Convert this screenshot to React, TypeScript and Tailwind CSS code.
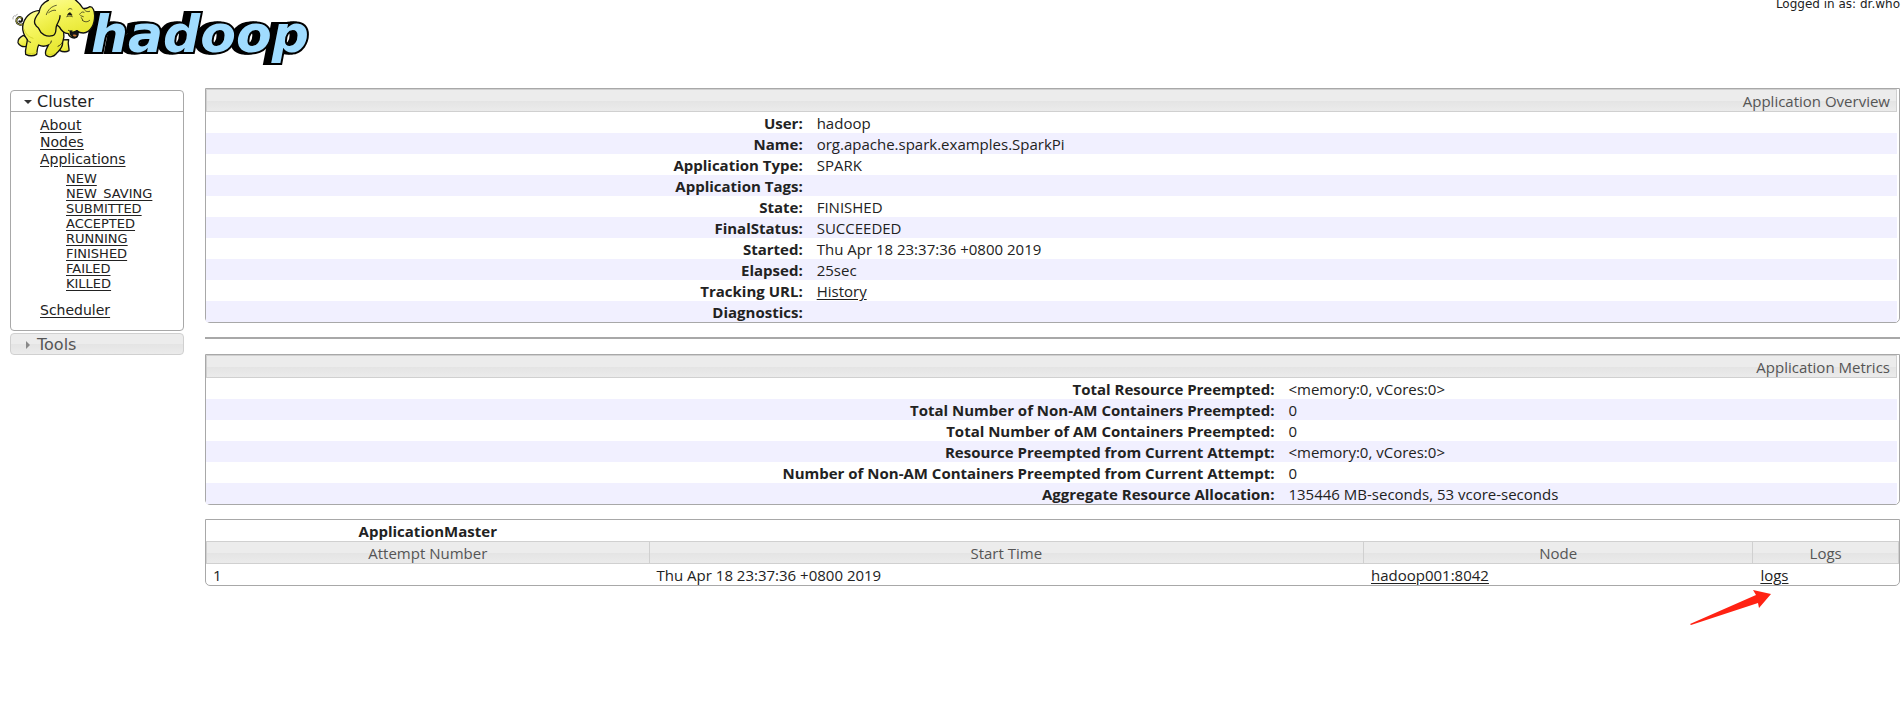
import type { ReactNode } from 'react';

const HEADER_BG =
  'border border-[#d0d0d0] bg-[linear-gradient(#ececec_50%,#e4e4e4_52%,#ebebeb)] font-normal text-[#555]';

const LINK = 'underline underline-offset-2';

const jobStates = ['NEW', 'NEW_SAVING', 'SUBMITTED', 'ACCEPTED', 'RUNNING', 'FINISHED', 'FAILED', 'KILLED'];

type Row = [string, ReactNode];

const overview: Row[] = [
  ['User:', 'hadoop'],
  ['Name:', 'org.apache.spark.examples.SparkPi'],
  ['Application Type:', 'SPARK'],
  ['Application Tags:', ''],
  ['State:', 'FINISHED'],
  ['FinalStatus:', 'SUCCEEDED'],
  ['Started:', 'Thu Apr 18 23:37:36 +0800 2019'],
  ['Elapsed:', '25sec'],
  ['Tracking URL:', <a href="#history" className={LINK}>History</a>],
  ['Diagnostics:', ''],
];

const metrics: Row[] = [
  ['Total Resource Preempted:', '<memory:0, vCores:0>'],
  ['Total Number of Non-AM Containers Preempted:', '0'],
  ['Total Number of AM Containers Preempted:', '0'],
  ['Resource Preempted from Current Attempt:', '<memory:0, vCores:0>'],
  ['Number of Non-AM Containers Preempted from Current Attempt:', '0'],
  ['Aggregate Resource Allocation:', '135446 MB-seconds, 53 vcore-seconds'],
];

function Logo() {
  return (
    <svg width="320" height="70" viewBox="0 0 320 70" role="img" aria-label="hadoop">
      <defs>
        <linearGradient id="skin" x1="0" y1="0" x2="0.4" y2="1">
          <stop offset="0" stopColor="#fdfda0" />
          <stop offset="0.45" stopColor="#f6f660" />
          <stop offset="1" stopColor="#e8e834" />
        </linearGradient>
      </defs>
      <text
        x="91"
        y="52"
        fontFamily="'DejaVu Sans', sans-serif"
        fontSize="52"
        fontWeight="700"
        fontStyle="italic"
        fill="#a0dcff"
        stroke="#000"
        strokeWidth="4"
        paintOrder="stroke"
        className="[filter:drop-shadow(-3px_0_0_#000)_drop-shadow(-3px_0_0_#000)]"
      >
        hadoop
      </text>
      <g transform="scale(0.33333)" stroke="#111" strokeWidth="4" strokeLinecap="round" strokeLinejoin="round">
        <path d="M73 70 C64 78 51 74 49 64 C48 53 58 48 65 54 C70 60 64 68 58 64" fill="none" strokeWidth="6" />
        <path d="M73 70 C64 78 51 74 49 64 C48 53 58 48 65 54" fill="none" stroke="#e8e84a" strokeWidth="2" />
        <path d="M39 57 C38 52 40 49 43 47 M46 49 C47 46 49 44 52 43" fill="none" strokeWidth="1.5" stroke="#555" />
        <path d="M70 106 C60 111 53 119 54 128 C58 138 69 142 79 139 L88 116 Z" fill="url(#skin)" />
        <path d="M182 120 L206 119 C202 132 208 142 207 152 C198 157 188 156 178 151 Z" fill="url(#skin)" />
        <path
          d="M118 31 C91 34 71 53 68 80 C67 96 73 108 82 119 C81 136 74 148 77 163 C87 168 101 168 110 163 C112 152 111 144 116 135 C126 140 137 139 145 135 C142 145 132 153 138 166 C148 174 161 170 168 162 C178 151 189 144 188 127 C192 116 193 106 191 96 L164 24 Z"
          fill="url(#skin)"
        />
        <path
          d="M132 16 C146 -10 178 -20 207 -12 C225 -4 238 8 248 24 C256 29 263 23 270 20 C279 20 284 33 284 47 C284 73 272 98 250 99 C240 99 235 96 231 92 C236 101 235 114 223 114 C214 113 207 107 205 101 C194 100 184 92 179 82 L145 53 Z"
          fill="url(#skin)"
        />
        <path d="M211 94 C216 98 224 97 231 92 C235 99 234 113 223 112 C214 109 210 102 211 94 Z" fill="#171717" />
        <path d="M218 105 C222 103 227 103 230 106 C228 111 222 111 218 105 Z" fill="#cf7b36" stroke="none" />
        <path d="M205 91 C207 93 211 94 216 92" fill="none" strokeWidth="2.5" />
        <path
          d="M145 1 C128 8 119 22 117 38 C105 53 99 66 107 75 C110 82 114 80 117 87 C122 102 139 112 158 107 C172 103 165 88 170 76 C173 67 181 60 180 47"
          fill="url(#skin)"
        />
        <path d="M139 44 C144 28 155 19 169 16 M146 38 C153 33 160 29 167 31" fill="none" strokeWidth="2" />
        <path d="M203 45 C206 35 213 36 216 46 C212 44 207 43 203 45 Z" fill="#111" strokeWidth="2" />
        <path d="M200 50 C207 47 212 48 217 50 M204 29 C208 24 213 25 216 28 M239 43 C244 35 250 34 253 38 M242 47 L250 50" fill="none" strokeWidth="2" />
        <path d="M249 24 C255 34 262 37 269 34 M247 61 C254 67 263 67 269 61 M244 53 L248 60" fill="none" strokeWidth="2" />
        <path d="M145 135 C151 132 153 129 154 123 M81 119 C85 124 88 126 92 127 M187 127 C184 132 180 136 174 139" fill="none" strokeWidth="2.5" />
        <path d="M72 88 C76 102 85 111 99 115 M110 157 C100 162 89 162 80 159 M164 160 C155 165 146 165 140 161" fill="none" stroke="#c9c91f" strokeWidth="2" />
      </g>
    </svg>
  );
}

function InfoTable({ title, rows, labelWidth }: { title: string; rows: Row[]; labelWidth: string }) {
  return (
    <div className="rounded-b-[5px] border border-[#a8a8a8] pr-0.5">
      <table className="w-full table-fixed border-separate border-spacing-0">
        <colgroup>
          <col className={labelWidth} />
          <col />
        </colgroup>
        <thead>
          <tr>
            <th colSpan={2} className={`h-[23px] px-1.5 text-right leading-5 ${HEADER_BG}`}>
              {title}
            </th>
          </tr>
        </thead>
        <tbody className="leading-[19px]">
          {rows.map(([label, value]) => (
            <tr key={label} className="h-[21px] even:bg-[#f1f0ff]">
              <th scope="row" className="pt-0.5 pr-[7px] text-right font-bold">{label}</th>
              <td className="pt-0.5 pr-2 pl-[7px]">{value}</td>
            </tr>
          ))}
        </tbody>
      </table>
    </div>
  );
}

function Sidebar() {
  return (
    <nav className="w-[174px] shrink-0 pt-0.5 font-['DejaVu_Sans',sans-serif] text-sm leading-[17px]">
      <div className="h-[241px] rounded-[4px] border border-[#a8a8a8]">
        <button type="button" className="flex h-[21px] w-full items-center gap-1 border-b border-[#a8a8a8] pt-0.5 pl-3 text-base">
          <svg width="10" height="10" viewBox="0 0 10 10" aria-hidden="true">
            <path d="M1 3h8L5 7z" fill="#333" />
          </svg>
          Cluster
        </button>
        <ul className="pt-[5px] pl-[29px]">
          <li><a href="#about" className={LINK}>About</a></li>
          <li><a href="#nodes" className={LINK}>Nodes</a></li>
          <li>
            <a href="#applications" className={LINK}>Applications</a>
            <ul className="pt-[3px] pb-[11px] pl-[26px] text-[13px] leading-[15px]">
              {jobStates.map((state) => (
                <li key={state}><a href={`#${state}`} className={LINK}>{state}</a></li>
              ))}
            </ul>
          </li>
          <li><a href="#scheduler" className={LINK}>Scheduler</a></li>
        </ul>
      </div>
      <button type="button" className={`mt-0.5 flex h-[22px] w-full items-center gap-1 rounded-[4px] pt-0.5 pl-3 text-base ${HEADER_BG}`}>
        <svg width="10" height="10" viewBox="0 0 10 10" aria-hidden="true">
          <path d="M3 1v8l4-4z" fill="#888" />
        </svg>
        Tools
      </button>
    </nav>
  );
}

function AttemptTable() {
  return (
    <div className="relative rounded-b-[5px] border border-[#a8a8a8]">
      <table className="w-full table-fixed border-separate border-spacing-0 leading-[19px]">
        <colgroup>
          <col className="w-[26.2%]" />
          <col className="w-[42.2%]" />
          <col className="w-[23%]" />
          <col className="w-[8.6%]" />
        </colgroup>
        <thead>
          <tr>
            <th className="h-[21px] pt-0.5 font-bold">ApplicationMaster</th>
          </tr>
          <tr>
            <th className={`h-[23px] pt-0.5 ${HEADER_BG}`}>Attempt Number</th>
            <th className={`border-l-0 pt-0.5 ${HEADER_BG}`}>Start Time</th>
            <th className={`border-l-0 pt-0.5 ${HEADER_BG}`}>Node</th>
            <th className={`border-l-0 pt-0.5 ${HEADER_BG}`}>Logs</th>
          </tr>
        </thead>
        <tbody>
          <tr className="h-[21px]">
            <td className="px-[7px] pt-0.5">1</td>
            <td className="px-[7px] pt-0.5">Thu Apr 18 23:37:36 +0800 2019</td>
            <td className="px-[7px] pt-0.5"><a href="#node" className={LINK}>hadoop001:8042</a></td>
            <td className="px-[7px] pt-0.5"><a href="#logs" className={LINK}>logs</a></td>
          </tr>
        </tbody>
      </table>
      <div className="absolute top-full right-[126px] z-10 pt-1">
        <svg width="84" height="38" viewBox="0 0 84 38" className="block" aria-hidden="true">
          <path d="M1 35 L67 6 L64 1 L82 5 L70 19 L69 14 L2 36 Z" fill="#ff2213" />
        </svg>
      </div>
    </div>
  );
}

export default function App() {
  return (
    <div className="min-h-screen bg-white font-['Open_Sans','Noto_Sans',sans-serif] text-[15px] leading-[21px] text-[#222]">
      <header className="flex h-[88px] items-start justify-between pr-1">
        <Logo />
        <div className="-mt-[3px] font-['DejaVu_Sans',sans-serif] text-xs leading-[14px]">Logged in as: dr.who</div>
      </header>
      <div className="flex items-start gap-[21px] pr-1 pl-2.5">
        <Sidebar />
        <main className="min-w-0 flex-1">
          <InfoTable title="Application Overview" rows={overview} labelWidth="w-[35.7%]" />
          <hr className="mt-3.5 mb-[15px] border-t-2 border-[#a8a8a8]" />
          <InfoTable title="Application Metrics" rows={metrics} labelWidth="w-[63.6%]" />
          <div className="mt-3.5">
            <AttemptTable />
          </div>
        </main>
      </div>
    </div>
  );
}
